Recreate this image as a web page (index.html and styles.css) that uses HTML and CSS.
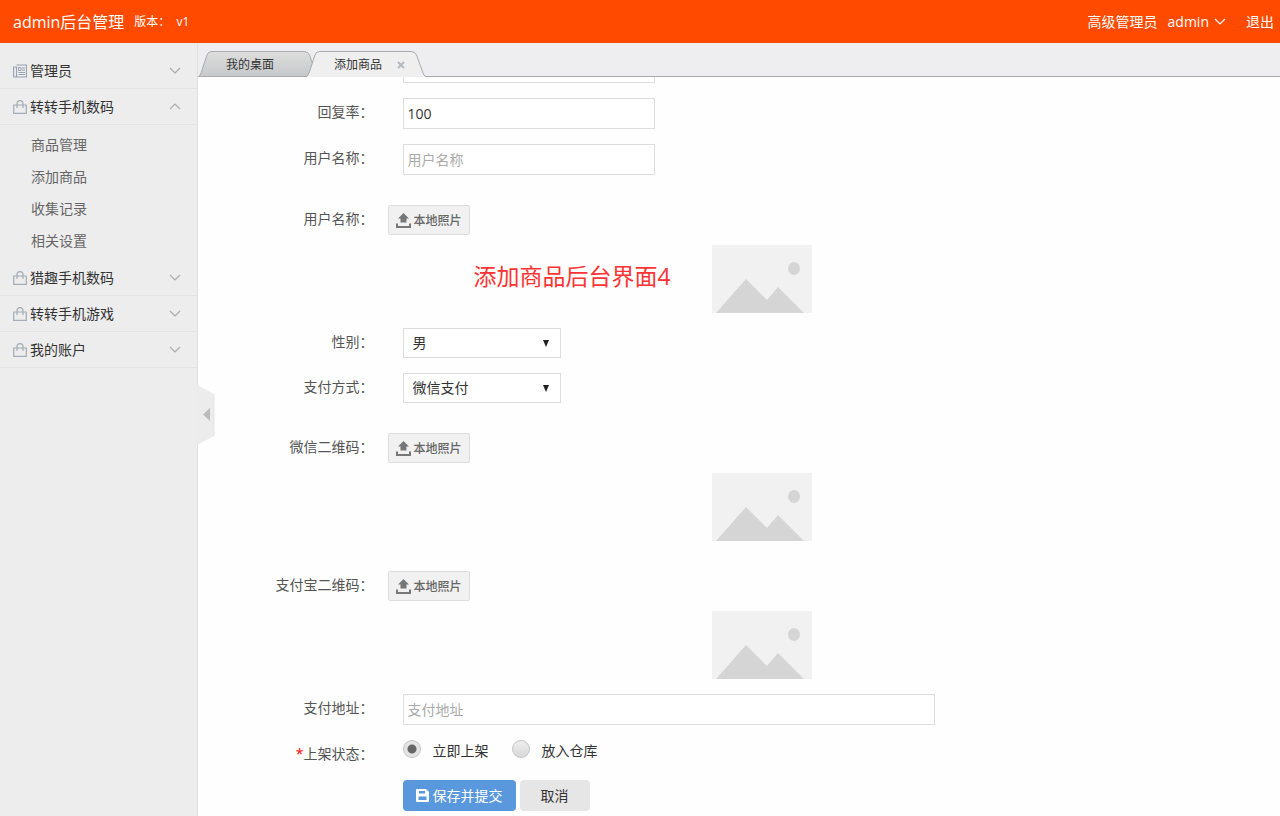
FILE: index.html
```html
<!DOCTYPE html>
<html lang="zh-CN">
<head>
<meta charset="utf-8">
<title>admin后台管理</title>
<link rel="stylesheet" href="styles.css">
</head>
<body>
<svg class="defs" aria-hidden="true">
  <symbol id="bag" viewBox="0 0 14 14"><path d="M.7 5h12.600v8.300H.7zM4 8V4a3 3.300 0 0 1 6 0v4" fill="none" stroke="#a3abb6" stroke-width="1.200"/></symbol>
  <symbol id="news" viewBox="0 0 14 13"><path d="M3.500 .5h10v12h-12q-1 0-1-1v-9h3v9q0 1-1 1" fill="none" stroke="#98a2b0" stroke-width="1.200"/><path d="M5.500 3h2.500v3H5.500zM9 3.500h3M9 5.500h3M5.500 8h6.500M5.500 10h6.500" fill="none" stroke="#98a2b0"/></symbol>
  <symbol id="down" viewBox="0 0 12 7"><path d="M1 1l5 5 5-5" fill="none" stroke="currentColor" stroke-width="1.200"/></symbol>
  <symbol id="up" viewBox="0 0 12 7"><path d="M1 6l5-5 5 5" fill="none" stroke="currentColor" stroke-width="1.200"/></symbol>
  <symbol id="upload" viewBox="0 0 15 15"><path d="M7.500 0l5.500 5.500H10.500V9.500h-6V5.500H2zM0 10.500h2V13h11v-2.500h2V15H0z" fill="#777"/></symbol>
  <symbol id="photo" viewBox="0 0 100 68"><path fill="#f1f1f1" d="M0 0h100v68H0z"/><path fill="#d5d5d5" d="M4 68l30-34 21 21 11-13 26 26z"/><ellipse cx="82" cy="23.500" rx="6" ry="6.500" fill="#d5d5d5"/></symbol>
</svg>
<header class="header">
  <a class="brand" href="#">admin后台管理</a>
  <span class="version">版本：&nbsp; v1</span>
  <nav class="user">
    <span>高级管理员</span>
    <a class="user-name" href="#">admin<svg class="chev"><use href="#down"/></svg></a>
    <a class="logout" href="#">退出</a>
  </nav>
</header>
<div class="layout">
  <aside class="sidebar">
    <button class="menu" type="button"><svg class="menu-icon"><use href="#news"/></svg><span>管理员</span><svg class="chev"><use href="#down"/></svg></button>
    <button class="menu" type="button"><svg class="menu-icon"><use href="#bag"/></svg><span>转转手机数码</span><svg class="chev"><use href="#up"/></svg></button>
    <ul class="submenu">
      <li><a href="#">商品管理</a></li>
      <li><a href="#">添加商品</a></li>
      <li><a href="#">收集记录</a></li>
      <li><a href="#">相关设置</a></li>
    </ul>
    <button class="menu" type="button"><svg class="menu-icon"><use href="#bag"/></svg><span>猎趣手机数码</span><svg class="chev"><use href="#down"/></svg></button>
    <button class="menu" type="button"><svg class="menu-icon"><use href="#bag"/></svg><span>转转手机游戏</span><svg class="chev"><use href="#down"/></svg></button>
    <button class="menu" type="button"><svg class="menu-icon"><use href="#bag"/></svg><span>我的账户</span><svg class="chev"><use href="#down"/></svg></button>
    <button class="collapse" type="button" aria-label="收起菜单"><svg viewBox="0 0 18 60"><path d="M0 0l17 9v42L0 60z" fill="#ececec"/><path d="M17 9v42" stroke="#e4e4e4"/><path d="M13 23v13l-7-6.500z" fill="#bbb"/></svg></button>
  </aside>
  <main class="main">
    <nav class="tabs">
      <a class="tab" href="#">
        <svg class="tab-shape" viewBox="0 0 120 26"><defs><linearGradient id="tabGrad" x2="0" y2="1"><stop stop-color="#dedede"/><stop offset="1" stop-color="#c6c8c9"/></linearGradient></defs><path d="M.5 25.500Q2 25 3 22L9 4Q10 .5 14 .5h92q4 0 5.500 3.500L119 25.500z" fill="url(#tabGrad)" stroke="#aaa"/></svg>
        <span>我的桌面</span>
      </a>
      <a class="tab tab-active" href="#">
        <svg class="tab-shape" viewBox="0 0 120 26"><path d="M0 26Q2 25 3 22L9 4Q10 .5 14 .5h91q4 0 5.500 3.500L117 22q1 3 3 4z" fill="#efeff0"/><path d="M0 25.500Q2 25 3 22L9 4Q10 .5 14 .5h91q4 0 5.500 3.500L117 22q1 3 3 3.500" fill="none" stroke="#aaa"/></svg>
        <span>添加商品</span>
        <svg class="close" viewBox="0 0 8 8"><path d="M1 1l6 6M7 1L1 7" stroke="#b3bac0" stroke-width="2"/></svg>
      </a>
    </nav>
    <form class="form">
      <div class="row row-cut"><div class="field"><input class="text" type="text" aria-label="评分"></div></div>
      <div class="row">
        <label class="label" for="rate">回复率：</label>
        <div class="field"><input class="text" id="rate" type="text" value="100"></div>
      </div>
      <div class="row">
        <label class="label" for="name">用户名称：</label>
        <div class="field"><input class="text" id="name" type="text" placeholder="用户名称"></div>
      </div>
      <div class="row row-upload">
        <label class="label" for="avatar">用户名称：</label>
        <div class="upload">
          <button class="pick" id="avatar" type="button"><svg><use href="#upload"/></svg>本地照片</button>
          <svg class="photo"><use href="#photo"/></svg>
          <p class="note">添加商品后台界面4</p>
        </div>
      </div>
      <div class="row">
        <label class="label" for="sex">性别：</label>
        <div class="field"><span class="select"><select id="sex"><option>男</option><option>女</option></select><svg viewBox="0 0 6 7"><path d="M0 0h6L3 7z" fill="#222"/></svg></span></div>
      </div>
      <div class="row">
        <label class="label" for="pay">支付方式：</label>
        <div class="field"><span class="select"><select id="pay"><option>微信支付</option><option>支付宝</option></select><svg viewBox="0 0 6 7"><path d="M0 0h6L3 7z" fill="#222"/></svg></span></div>
      </div>
      <div class="row row-upload">
        <label class="label" for="wechat">微信二维码：</label>
        <div class="upload">
          <button class="pick" id="wechat" type="button"><svg><use href="#upload"/></svg>本地照片</button>
          <svg class="photo"><use href="#photo"/></svg>
        </div>
      </div>
      <div class="row row-upload">
        <label class="label" for="alipay">支付宝二维码：</label>
        <div class="upload">
          <button class="pick" id="alipay" type="button"><svg><use href="#upload"/></svg>本地照片</button>
          <svg class="photo"><use href="#photo"/></svg>
        </div>
      </div>
      <div class="row">
        <label class="label" for="address">支付地址：</label>
        <div class="field"><input class="text text-wide" id="address" type="text" placeholder="支付地址"></div>
      </div>
      <div class="row">
        <span class="label" id="state"><span class="required">*</span>上架状态：</span>
        <div class="field radios" role="radiogroup" aria-labelledby="state">
          <label class="radio"><input type="radio" name="state" checked>立即上架</label>
          <label class="radio"><input type="radio" name="state">放入仓库</label>
        </div>
      </div>
      <div class="row">
        <div class="field actions">
          <button class="btn btn-save" type="submit"><svg viewBox="0 0 13 13"><path fill="#fff" fill-rule="evenodd" d="M1 0h9l3 3v9q0 1-1 1H1q-1 0-1-1V1q0-1 1-1zM3 2v2.500h6V2zM2.500 7.500V11h8V7.500z"/></svg>保存并提交</button>
          <button class="btn" type="button">取消</button>
        </div>
      </div>
    </form>
  </main>
</div>
</body>
</html>
```
FILE: styles.css
```css
* { box-sizing: border-box; }
body {
  margin: 0;
  height: 100vh;
  display: flex;
  flex-direction: column;
  overflow: hidden;
  background: #fefefe;
  color: #333;
  font: 14px/22px "Open Sans", "Noto Sans CJK SC", sans-serif;
}
a { color: inherit; text-decoration: none; }
button, input, select { font: inherit; color: inherit; }
button { cursor: pointer; }
.defs { position: absolute; width: 0; height: 0; }

.header {
  display: flex;
  align-items: center;
  flex: none;
  height: 43px;
  padding: 0 6px 0 13px;
  background: #ff4a00;
  color: #fff;
}
.brand { font-size: 16px; }
.version { margin-left: 10px; font-size: 12px; }
.user { display: flex; gap: 10px; margin-left: auto; }
.user-name { display: flex; align-items: center; gap: 5px; }
.logout { margin-left: 10px; }
.chev { width: 12px; height: 7px; }

.layout { display: flex; flex: 1; min-height: 0; }
.sidebar {
  position: relative;
  flex: none;
  width: 198px;
  padding-top: 10px;
  background: #ededed;
  border-right: 1px solid #e0e0e0;
}
.menu {
  display: flex;
  align-items: center;
  width: 100%;
  height: 36px;
  padding: 0 16px 0 13px;
  border: 0;
  border-bottom: 1px solid #e4e4e4;
  background: none;
}
.menu-icon { width: 14px; height: 14px; margin-right: 3px; }
.menu .chev { margin-left: auto; color: #aaa; }
.submenu { margin: 0; padding: 4px 0 3px 31px; list-style: none; color: #666; line-height: 32px; }
.collapse {
  position: absolute;
  left: 197px;
  top: 342px;
  width: 18px;
  height: 60px;
  padding: 0;
  border: 0;
  background: none;
}
.collapse svg { display: block; width: 18px; height: 60px; }

.main { display: flex; flex: 1; flex-direction: column; min-width: 0; }
.tabs {
  display: flex;
  flex: none;
  align-items: flex-end;
  height: 34px;
  background: #eeeef0;
  border-bottom: 1px solid #aaa;
}
.tab {
  position: relative;
  display: flex;
  align-items: center;
  width: 120px;
  height: 26px;
  margin-bottom: -1px;
  padding: 2px 0 0 28px;
  font-size: 12px;
}
.tab-active { margin-left: -12px; }
.tab-shape { position: absolute; left: 0; top: 0; width: 120px; height: 26px; }
.tab span { position: relative; }
.close { position: relative; width: 8px; height: 8px; margin-left: 15px; }

.form { flex: 1; min-height: 0; overflow: hidden; padding: 0 60px 0 23px; }
.row {
  display: grid;
  grid-template-columns: 2fr 9fr 1fr;
  align-items: start;
  margin-bottom: 15px;
}
.row-cut { margin-top: -25px; }
.row-upload { padding-top: 15px; }
.label { margin-top: 3px; padding-right: 14px; color: #555; text-align: right; }
.required { color: #f00; }
.field { grid-column: 2; padding-left: 15px; }
.text {
  display: block;
  width: 100%;
  max-width: 252px;
  height: 31px;
  padding: 0 4px;
  border: 1px solid #ddd;
  background: #fff;
}
.text-wide { max-width: 532px; }
.text::placeholder { color: #aaa; }
.select { position: relative; display: block; max-width: 158px; }
.select select {
  display: block;
  width: 100%;
  height: 30px;
  padding: 0 9px;
  border: 1px solid #ddd;
  border-radius: 0;
  background: #fff;
  appearance: none;
}
.select svg { position: absolute; right: 12px; top: 12px; width: 6px; height: 7px; }

.upload { position: relative; display: flex; flex-direction: column; gap: 10px; }
.pick {
  display: flex;
  align-items: center;
  align-self: flex-start;
  gap: 3px;
  height: 30px;
  padding: 1px 7px 0;
  border: 1px solid #ddd;
  border-radius: 2px;
  background: #f1f1f1;
  color: #666;
  font-size: 12px;
  font-weight: 500;
}
.pick svg { width: 15px; height: 15px; }
.photo { align-self: center; width: 100px; height: 68px; }
.note {
  position: absolute;
  left: 86px;
  top: 55px;
  margin: 0;
  color: #ff3333;
  font-size: 23px;
  line-height: 32px;
}

.radios { display: flex; gap: 23px; height: 24px; }
.radio { display: flex; align-items: flex-start; gap: 12px; }
.radio input {
  width: 18px;
  height: 18px;
  margin: 0;
  border: 1px solid #c4c4c4;
  border-radius: 50%;
  background: linear-gradient(#eee, #d8d8d8);
  appearance: none;
}
.radio input:checked { background: radial-gradient(circle, #666 4px, #e4e4e4 5px); }
.actions { display: flex; gap: 4px; }
.btn {
  display: flex;
  align-items: center;
  gap: 4px;
  height: 31px;
  padding: 0 21px;
  border: 0;
  border-radius: 4px;
  background: #e6e6e6;
}
.btn-save { padding: 0 13px; background: #5a98de; color: #fff; }
.btn-save svg { width: 13px; height: 13px; }
```
